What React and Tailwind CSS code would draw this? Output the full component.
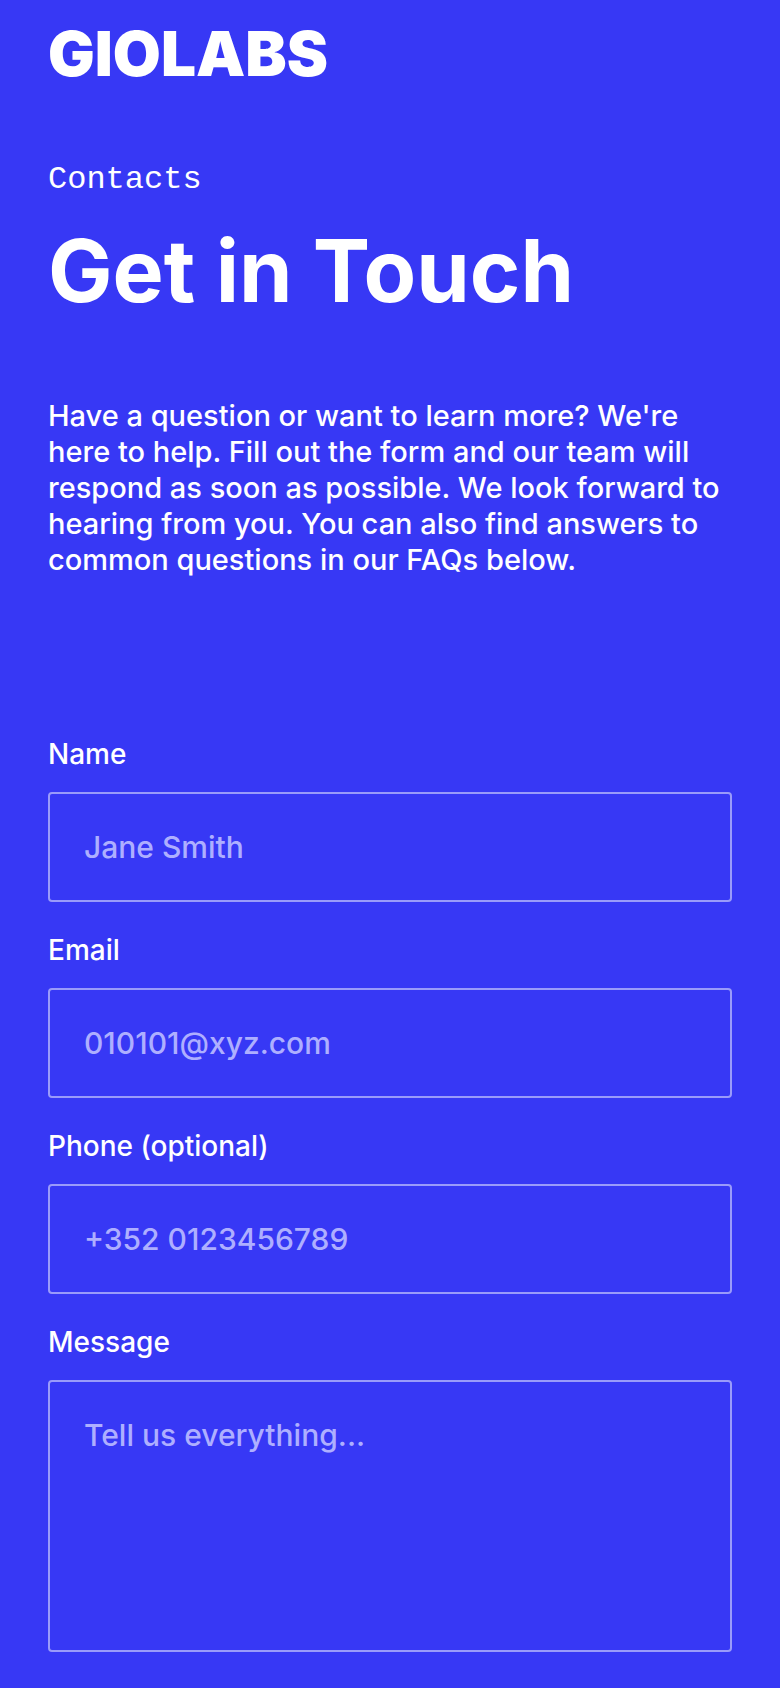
// Contact page
import { useState } from "react";

const fields = [
  { id: "name", label: "Name", type: "text", placeholder: "Jane Smith" },
  { id: "email", label: "Email", type: "email", placeholder: "010101@xyz.com" },
  {
    id: "phone",
    label: "Phone (optional)",
    type: "tel",
    placeholder: "+352 0123456789",
  },
  {
    id: "message",
    label: "Message",
    multiline: true,
    placeholder: "Tell us everything...",
  },
];

function Field({ field, value, onChange }) {
  const boxClass =
    "block w-full rounded border-2 border-[#9a9bfa] bg-transparent px-[34px] text-[30px] leading-[38px] font-medium text-white placeholder:text-[#aeafff] outline-none focus:border-white";

  return (
    <div className="flex flex-col gap-[22px]">
      <label htmlFor={field.id} className="text-[28px] leading-8 font-medium">
        {field.label}
      </label>
      {field.multiline ? (
        <textarea
          id={field.id}
          name={field.id}
          value={value}
          onChange={onChange}
          placeholder={field.placeholder}
          className={`${boxClass} h-[272px] resize-none py-[34px]`}
        />
      ) : (
        <input
          id={field.id}
          name={field.id}
          type={field.type}
          value={value}
          onChange={onChange}
          placeholder={field.placeholder}
          className={`${boxClass} h-[110px]`}
        />
      )}
    </div>
  );
}

export default function App() {
  const [values, setValues] = useState({});

  function handleChange(e) {
    setValues({ ...values, [e.target.name]: e.target.value });
  }

  return (
    <div className="min-h-screen bg-[#3738f5] px-12 pt-[22px] pb-9 font-['Inter',sans-serif] text-white">
      <header className="flex">
        <a href="#" className="text-[62px] leading-[64px] font-black">
          GIOLABS
        </a>
      </header>

      <main className="pt-[74px]">
        <p className="font-['Liberation_Mono',monospace] text-[32px] leading-10">
          Contacts
        </p>
        <h1 className="mt-5 text-[86px] leading-[102px] font-bold">
          Get in Touch
        </h1>
        <p className="mt-[76px] text-[29px] leading-9 font-medium">
          Have a question or want to learn more? We're here to help. Fill out
          the form and our team will respond as soon as possible. We look
          forward to hearing from you. You can also find answers to common
          questions in our FAQs below.
        </p>

        <form className="mt-40 flex flex-col gap-8">
          {fields.map((field) => (
            <Field
              key={field.id}
              field={field}
              value={values[field.id] || ""}
              onChange={handleChange}
            />
          ))}
        </form>
      </main>
    </div>
  );
}
